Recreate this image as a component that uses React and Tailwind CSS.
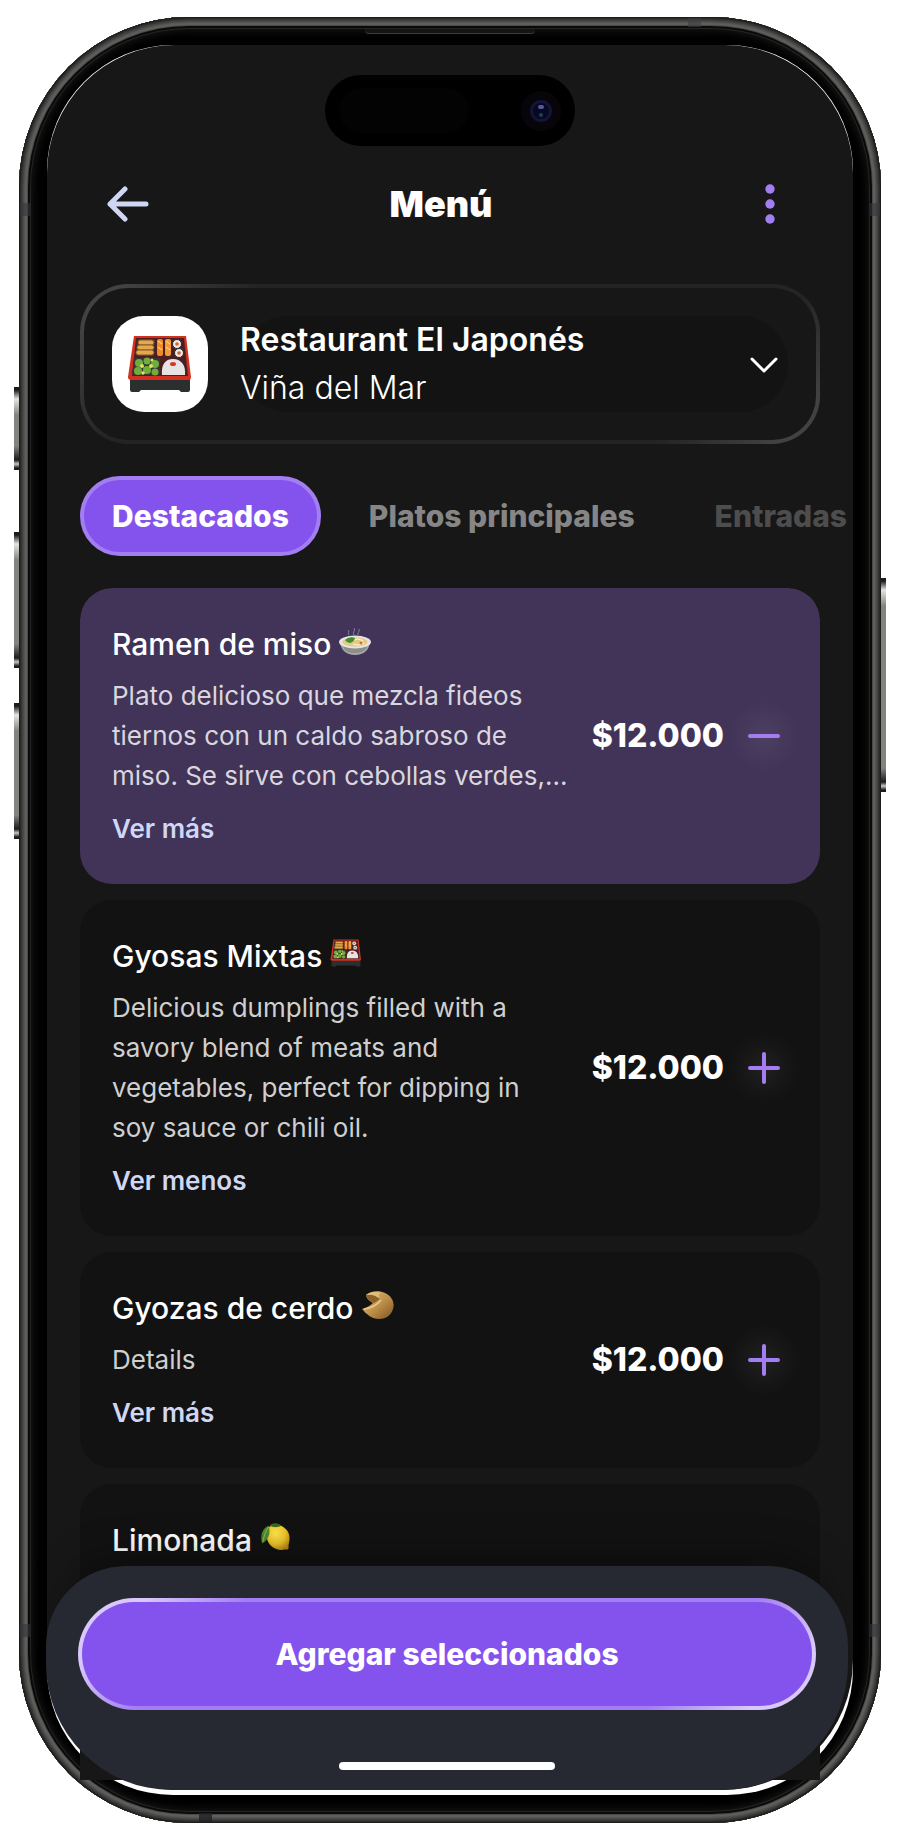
import React, { useState } from 'react';

const Bento = ({ className }) => (
    <svg viewBox="0 0 64 58" className={className} aria-hidden="true">
        <path d="M2 44h60v11q0 2-2 2h-7l-2-2H13l-2 2H4q-2 0-2-2z" fill="#2b2f30" />
        <path d="M6 1h52l5 41q0 3-3 3H3q-3 0-3-3z" fill="#d3301f" />
        <path d="M8 3h48l4 38H4z" fill="#4a1f22" />
        <path d="M9 4h18l-1 17H7zM6 23h26v17H4z" fill="#3a3436" />
        <g fill="#e2a94e" stroke="#8a5420" strokeWidth="1">
            <rect x="10" y="5" width="16" height="5" rx="2.5" />
            <rect x="9" y="10" width="17" height="5" rx="2.5" />
            <rect x="8" y="15" width="18" height="5" rx="2.5" />
        </g>
        <rect x="29" y="4" width="6" height="17" rx="2" fill="#f08a24" />
        <rect x="37" y="4" width="6" height="17" rx="2" fill="#f39a35" />
        <path d="M30 6l4 3M30 12l4 3M38 6l4 3M38 12l4 3" stroke="#ffc46b" strokeWidth="1.5" />
        <g fill="#efe9e4" stroke="#26292a" strokeWidth="1">
            <circle cx="49" cy="9" r="4.5" />
            <circle cx="51" cy="18" r="4.5" />
        </g>
        <circle cx="49" cy="9" r="1.8" fill="#d9622c" />
        <circle cx="51" cy="18" r="1.8" fill="#d9622c" />
        <g fill="#6fae3a">
            <circle cx="11" cy="28" r="4" />
            <circle cx="19" cy="26" r="3.5" />
            <circle cx="27" cy="29" r="4" />
            <circle cx="10" cy="36" r="4" />
            <circle cx="19" cy="35" r="4" />
            <circle cx="27" cy="37" r="3.5" />
        </g>
        <g fill="#d9e36a">
            <circle cx="14" cy="31" r="2" />
            <circle cx="23" cy="31" r="2" />
            <circle cx="15" cy="38" r="1.8" />
            <circle cx="24" cy="25" r="1.5" />
        </g>
        <path d="M34 40c-1-10 3-16 11-16s13 6 12 16z" fill="#e6e3e4" />
        <ellipse cx="45" cy="29" rx="3" ry="2" fill="#d8382c" />
    </svg>
);

const Ramen = ({ className }) => (
    <svg viewBox="0 0 32 28" className={className} aria-hidden="true">
        <path d="M10 8c-2-2 1-3-1-5M15 8c-2-3 2-4 0-7M19 8c-1-2 2-3 1-6" fill="none" stroke="#a79fb4" strokeWidth="1" opacity=".7" />
        <path d="M1 15c1 8 6 13 15 13s14-5 15-13z" fill="#a7a7a7" />
        <path d="M4 20c2 4 6 6 12 6s10-2 12-6z" fill="#8d8d8d" />
        <ellipse cx="16" cy="15" rx="16" ry="6.5" fill="#e4e4e4" />
        <ellipse cx="16" cy="15" rx="12.5" ry="4.5" fill="#e6c987" />
        <path d="M15 13q5-2 9 1M14 17q6 2 11-1" fill="none" stroke="#fff1c4" strokeWidth="1.2" />
        <path d="M6 13q4-4 10-2-1 4-5 5-3 0-5-3z" fill="#3f8f2e" />
        <circle cx="22" cy="16" r="1.5" fill="#c9752f" />
    </svg>
);

const Cookie = ({ className }) => (
    <svg viewBox="0 0 32 28" className={className} aria-hidden="true">
        <defs>
            <linearGradient id="cookie" x1="0" y1="0" x2="1" y2="1">
                <stop offset="0" stopColor="#e6bf78" />
                <stop offset=".5" stopColor="#c1924c" />
                <stop offset="1" stopColor="#7d5520" />
            </linearGradient>
        </defs>
        <path d="M4 4C8 0 17-1 23 2c7 3 10 10 8 16-2 7-8 10-14 10C10 28 4 23 0 18c4-1 8-3 11-6C9 11 5 9 4 4z" fill="url(#cookie)" />
        <path d="M4 4c5-1 10 0 14 4l-6 4C9 11 5 9 4 4z" fill="#8d6228" />
        <path d="M4 4c4-3 10-4 15-2-3 1-3 3-1 6C14 4 9 3 4 4z" fill="#e2bd7c" />
        <path d="M2 18c8-1 13-4 17-9" fill="none" stroke="#edcb8b" strokeWidth="1.5" />
    </svg>
);

const Lemon = ({ className }) => (
    <svg viewBox="0 0 32 30" className={className} aria-hidden="true">
        <defs>
            <radialGradient id="lemon" cx=".4" cy=".35" r=".7">
                <stop offset="0" stopColor="#ffe84d" />
                <stop offset=".6" stopColor="#efc52b" />
                <stop offset="1" stopColor="#b98a12" />
            </radialGradient>
        </defs>
        <path d="M9 4C14 1 22 1 27 7c4 4 4 10 3 14-1 3 0 5-1 7-2 1-4 0-6 1-7 0-13-3-16-10-2-6-1-12 2-15z" fill="url(#lemon)" />
        <path d="M9 3c4-4 10-3 13 0-4 2-9 2-13 0z" fill="#3a6b1f" />
        <path d="M8 3C1 6-1 13 1 22c6-3 10-10 7-19z" fill="#4d8a2d" />
        <path d="M8 4C5 9 3 14 2 20" fill="none" stroke="#8fc06a" strokeWidth="1" />
    </svg>
);

const items = [
    {
        name: 'Ramen de miso',
        icon: Ramen,
        price: '$12.000',
        details: 'Plato delicioso que mezcla fideos tiernos con un caldo sabroso de miso. Se sirve con cebollas verdes,...',
    },
    {
        name: 'Gyosas Mixtas',
        icon: Bento,
        price: '$12.000',
        open: true,
        details: 'Delicious dumplings filled with a savory blend of meats and vegetables, perfect for dipping in soy sauce or chili oil.',
    },
    { name: 'Gyozas de cerdo', icon: Cookie, price: '$12.000', details: 'Details' },
    { name: 'Limonada', icon: Lemon, price: '$12.000', details: 'Details' },
];

const tabs = [
    { name: 'Destacados', style: 'text-white' },
    { name: 'Platos principales', style: 'text-[#868686]' },
    { name: 'Entradas', style: 'text-[#4d4d4d]' },
];

const MenuItem = ({ item, selected, onToggle }) => {
    const [open, setOpen] = useState(item.open);
    const Icon = item.icon;

    return (
        <li className={`flex shrink-0 items-center gap-4 rounded-[32px] p-8 ${selected ? 'bg-[#413458]' : 'bg-[#121212]'}`}>
            <div className="min-w-0 flex-1">
                <h2 className="flex h-12 items-center gap-2 pt-px text-[30px] font-medium text-white">
                    {item.name}
                    <Icon className="mb-2 h-7 w-8" />
                </h2>
                <p className={`mt-2 max-w-[456px] text-[26px] leading-10 ${selected ? 'text-[#d9d6de]' : 'text-[#cfcfcf]'} ${open ? '' : 'line-clamp-3'}`}>
                    {item.details}
                </p>
                <button className="mt-2 block h-12 text-[26px] font-semibold text-[#d0d7f5]" onClick={() => setOpen(!open)}>
                    {open ? 'Ver menos' : 'Ver más'}
                </button>
            </div>
            <span className="text-[32px] font-extrabold text-white">{item.price}</span>
            <button
                aria-label={selected ? `Quitar ${item.name}` : `Agregar ${item.name}`}
                className="-m-3 flex size-18 items-center justify-center bg-[radial-gradient(closest-side,#ffffff10,#ffffff06_55%,#ffffff00)]"
                onClick={onToggle}
            >
                <svg viewBox="0 0 32 32" className="size-8" fill="none" stroke="#a37ef2" strokeWidth="4" strokeLinecap="round">
                    <path d={selected ? 'M2 16h28' : 'M2 16h28M16 2v28'} />
                </svg>
            </button>
        </li>
    );
};

const sideKey =
    'absolute w-[5px] bg-[linear-gradient(#1c1c1c,#1c1c1c_3px,#e6e4de_12px,#85837e_28px,#85837e_calc(100%-24px),#1c1c1c_calc(100%-10px),#c9c7c2_calc(100%-6px),#1c1c1c_calc(100%-2px))]';

const Hardware = () => (
    <div aria-hidden="true">
        <i className={`${sideKey} top-[370px] -left-[5px] h-[83px]`} />
        <i className={`${sideKey} top-[515px] -left-[5px] h-[136px]`} />
        <i className={`${sideKey} top-[686px] -left-[5px] h-[136px]`} />
        <i className={`${sideKey} top-[561px] -right-[5px] h-[214px]`} />
        <i className="absolute top-[186px] left-px h-[13px] w-[10px] bg-[#33373a99]" />
        <i className="absolute top-[186px] right-px h-[13px] w-[10px] bg-[#33373a99]" />
        <i className="absolute bottom-[186px] left-px h-[13px] w-[10px] bg-[#33373a99]" />
        <i className="absolute right-px bottom-[186px] h-[13px] w-[10px] bg-[#33373a99]" />
        <i className="absolute top-px right-[180px] h-[9px] w-[13px] bg-[#3d3f4299]" />
        <i className="absolute bottom-px left-[180px] h-[9px] w-[13px] bg-[#1f2225cc]" />
        <i className="absolute inset-x-0 top-3 mx-auto h-[5px] w-[170px] rounded-b-sm border-b border-[#3a3a3a] bg-[#151515]" />
    </div>
);

const App = () => {
    const [tab, setTab] = useState('Destacados');
    const [selected, setSelected] = useState(['Ramen de miso']);

    const toggle = (name) => {
        setSelected(selected.includes(name) ? selected.filter((n) => n !== name) : [...selected, name]);
    };

    return (
        <div className="h-screen bg-white px-[19px] py-[17px] font-[Inter,sans-serif]">
            <div className="relative h-full rounded-[170px] bg-black p-7 shadow-[inset_0_0_0_1px_#1d1d1d,inset_0_0_0_2px_#2b2b2b,inset_0_0_0_3px_#363636,inset_0_0_0_4px_#414140,inset_0_0_0_5px_#4b4b49,inset_0_0_0_6px_#555553,inset_0_0_0_8px_#5f5e5b,inset_0_0_0_9px_#4a4a48,inset_0_0_0_11px_#0a0a0a,inset_0_0_0_12px_#242424,inset_0_0_10px_13px_#1a1a1a]">
                <Hardware />
                <div className="h-full rounded-[126px] bg-white pb-[5px]">
                    <div className="relative flex h-full flex-col rounded-t-[128px] rounded-b-[130px] bg-[#171717] pb-[10px]">
                        <div className="mx-auto mt-[30px] flex h-[71px] w-[250px] shrink-0 items-center justify-between rounded-full bg-black px-[14px]">
                            <div className="h-[45px] w-[130px] rounded-full bg-[#030303]" />
                            <div className="flex size-10 items-center justify-center rounded-full bg-[#07050a]">
                                <div className="flex size-[22px] flex-col items-center justify-center gap-1 rounded-full border-3 border-[#12143a] bg-[#080920]">
                                    <i className="h-1 w-1.5 rounded-full bg-[#55589e]" />
                                    <i className="size-1 rounded-full bg-[#1a4257]" />
                                </div>
                            </div>
                        </div>

                        <header className="mx-[33px] mt-[18px] flex h-20 shrink-0 items-center justify-between pr-[10px] pl-6">
                            <button aria-label="Volver" className="flex size-12 items-center justify-center">
                                <svg viewBox="0 0 42 36" className="h-9 w-[42px]" fill="none" stroke="#d0d7f5" strokeWidth="5" strokeLinecap="round" strokeLinejoin="round">
                                    <path d="M39 18H3M18 3L3 18l15 15" />
                                </svg>
                            </button>
                            <h1 className="text-[36px] font-black text-white">Menú</h1>
                            <button aria-label="Opciones" className="flex h-12 w-20 items-center justify-center">
                                <svg viewBox="0 0 10 40" className="h-10 w-[10px]" fill="#a37ef2">
                                    <circle cx="5" cy="5" r="4.7" />
                                    <circle cx="5" cy="20" r="4.7" />
                                    <circle cx="5" cy="35" r="4.7" />
                                </svg>
                            </button>
                        </header>

                        <div className="mx-[33px] mt-10 shrink-0 rounded-[48px] bg-[linear-gradient(135deg,#424242_5%,#242424_20%,#242424_82%,#424242_95%)] p-1">
                            <div className="flex items-center gap-8 rounded-[44px] bg-[#171717] p-7">
                                <div className="flex size-24 items-center justify-center rounded-[32px] bg-white">
                                    <Bento className="h-[58px] w-16" />
                                </div>
                                <button className="flex flex-1 items-center justify-between rounded-full bg-[#131313] pr-2 text-left text-[32px] leading-12 text-white">
                                    <span>
                                        <b className="block font-semibold">Restaurant El Japonés</b>
                                        <span className="block font-light">Viña del Mar</span>
                                    </span>
                                    <svg viewBox="0 0 32 32" className="size-8" fill="none" stroke="white" strokeWidth="3" strokeLinecap="round" strokeLinejoin="round">
                                        <path d="M4 11l12 12 12-12" />
                                    </svg>
                                </button>
                            </div>
                        </div>

                        <nav className="mt-8 flex shrink-0 gap-4 overflow-hidden pl-[33px]">
                            {tabs.map((t) => (
                                <button
                                    key={t.name}
                                    onClick={() => setTab(t.name)}
                                    className={`h-20 shrink-0 rounded-full border-4 px-7 text-[30px] font-extrabold ${t.style} ${tab === t.name ? 'border-[#a37ef2] bg-[#8453ed]' : 'border-transparent'}`}
                                >
                                    {t.name}
                                </button>
                            ))}
                        </nav>

                        <ul className="mx-[33px] mt-8 flex min-h-0 flex-1 flex-col gap-4 overflow-hidden rounded-t-[32px] bg-[#171717]">
                            {items.map((item) => (
                                <MenuItem
                                    key={item.name}
                                    item={item}
                                    selected={selected.includes(item.name)}
                                    onToggle={() => toggle(item.name)}
                                />
                            ))}
                        </ul>

                        <footer className="absolute right-[5px] bottom-0 -left-px rounded-t-[80px] rounded-b-[126px] bg-[#272932] px-8 pt-8 pb-5 shadow-[0_-28px_40px_-20px_#00000059]">
                            <div className="rounded-full bg-[linear-gradient(135deg,#d9c8fb_8%,#a37ef2_20%,#a37ef2_80%,#d9c8fb_92%)] p-1">
                                <button className="block h-26 w-full rounded-full bg-[#8453ed] text-[30px] font-extrabold text-white">
                                    Agregar seleccionados
                                </button>
                            </div>
                            <div className="mx-auto mt-[52px] h-2 w-[216px] rounded-full bg-white" />
                        </footer>
                    </div>
                </div>
            </div>
        </div>
    );
};

export default App;
